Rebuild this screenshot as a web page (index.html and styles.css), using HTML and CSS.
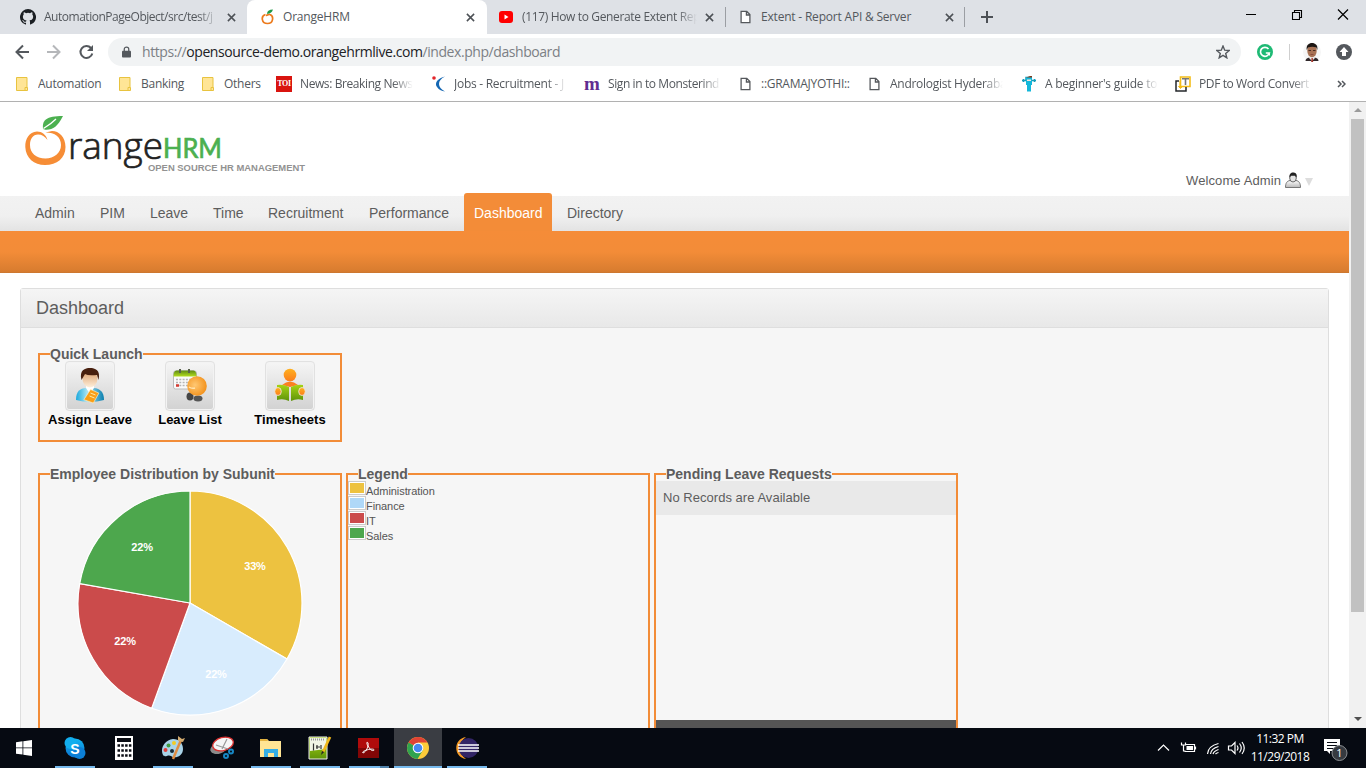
FILE: index.html
```html
<!DOCTYPE html>
<html lang="en">
<head>
<meta charset="utf-8">
<title>OrangeHRM</title>
<link rel="stylesheet" href="styles.css">
</head>
<body>
<svg class="defs" width="0" height="0">
  <defs>
    <linearGradient id="sky" x1="0" y1="0" x2="0" y2="1"><stop offset="0" stop-color="#12b5f2"/><stop offset="1" stop-color="#0a74d1"/></linearGradient>
    <linearGradient id="lime" x1="0" y1="0" x2="0" y2="1"><stop offset="0" stop-color="#a6d414"/><stop offset="1" stop-color="#5f930a"/></linearGradient>
    <linearGradient id="leaf" x1="0" y1="0" x2="0" y2="1"><stop offset="0" stop-color="#5d8a12"/><stop offset="1" stop-color="#b4de20"/></linearGradient>
    <linearGradient id="amber" x1="0" y1="0" x2="0" y2="1"><stop offset="0" stop-color="#ffb11f"/><stop offset="1" stop-color="#fb7d1c"/></linearGradient>
    <radialGradient id="ball" cx=".4" cy=".45" r=".6"><stop offset="0" stop-color="#ffc873"/><stop offset="1" stop-color="#f3921c"/></radialGradient>
    <linearGradient id="shirt" x1="0" y1="0" x2="1" y2="0"><stop offset="0" stop-color="#1aa9dd"/><stop offset=".4" stop-color="#a9e4f4"/><stop offset="1" stop-color="#0b7fae"/></linearGradient>
    <linearGradient id="skin" x1="0" y1="0" x2="0" y2="1"><stop offset="0" stop-color="#d99a66"/><stop offset="1" stop-color="#fff0dc"/></linearGradient>
    <linearGradient id="grey" x1="0" y1="0" x2="0" y2="1"><stop offset="0" stop-color="#fff"/><stop offset="1" stop-color="#b8b8b8"/></linearGradient>
    <symbol id="x" viewBox="0 0 10 10"><path d="M1 1l8 8M9 1L1 9" stroke="#4d5156" stroke-width="1.7" fill="none"/></symbol>
    <symbol id="doc" viewBox="0 0 12 14"><path d="M1.2.8h6.2l3.4 3.6v8.8H1.2zM7 1v3.8h3.8" fill="#fff" stroke="#55585c" stroke-width="1.4"/></symbol>
    <symbol id="folder" viewBox="0 0 12 14"><path d="M.5.5h10.5v10h.5v3H.5z" fill="#ffe596" stroke="#e8c33f"/><path d="M9 13V10.500h2" fill="none" stroke="#e8c33f"/></symbol>
  </defs>
</svg>

<header class="tabs">
  <div class="tab tab-1">
    <svg class="ico16" viewBox="0 0 16 16"><path fill="#1b1f23" d="M8 0a8 8 0 0 0-2.530 15.590c.4.070.55-.17.55-.38v-1.490c-2.230.49-2.700-.94-2.700-.94-.36-.92-.89-1.170-.89-1.170-.73-.5.06-.49.06-.49.8.06 1.230.83 1.230.83.71 1.230 1.870.87 2.330.66.070-.52.280-.87.500-1.070-1.780-.2-3.640-.89-3.640-3.950 0-.87.310-1.590.83-2.150-.08-.2-.36-1.020.080-2.120 0 0 .67-.21 2.200.82a7.600 7.600 0 0 1 4 0c1.530-1.040 2.200-.82 2.200-.82.44 1.100.16 1.920.080 2.120.51.560.82 1.270.82 2.150 0 3.070-1.870 3.750-3.650 3.950.29.250.54.730.54 1.480v2.190c0 .21.150.46.550.38A8 8 0 0 0 8 0z"/></svg>
    <span class="tab-title fade">AutomationPageObject/src/test/j</span>
    <svg class="x"><use href="#x"/></svg>
  </div>
  <div class="tab tab-2">
    <svg class="ico-or" viewBox="0 0 14 16"><path d="M4.500 5.500C-.5 7 .5 14.500 6.500 14.500S13 7 9 5.500C8 5 6.500 6.500 5 6.300" fill="none" stroke="#ec7a1c" stroke-width="1.700"/><path d="M6 5c0-3 2-4.500 6-4.500C11 3.500 9 4.500 6 5z" fill="#1f9a49"/></svg>
    <span class="tab-title">OrangeHRM</span>
    <svg class="x"><use href="#x"/></svg>
  </div>
  <div class="tab tab-3">
    <svg class="ico-yt" viewBox="0 0 14 12"><rect width="14" height="12" rx="3" fill="#f00"/><path d="M5.500 3.500v5l4-2.500z" fill="#fff"/></svg>
    <span class="tab-title fade">(117) How to Generate Extent Rep</span>
    <svg class="x"><use href="#x"/></svg>
  </div>
  <div class="tab tab-4">
    <svg class="ico-doc"><use href="#doc"/></svg>
    <span class="tab-title">Extent - Report API &amp; Server</span>
    <svg class="x"><use href="#x"/></svg>
  </div>
  <svg class="plus" viewBox="0 0 12 12"><path d="M6 0v12M0 6h12" stroke="#4d5156" stroke-width="2"/></svg>
  <svg class="winctl" viewBox="0 0 104 14"><g fill="none" stroke="#000"><path d="M0 7.500h10M46.500 5.500h7v7h-7zM48.500 5.500v-2h7v7h-2" stroke-width="1.100"/><path d="M92 2.500l10 10M102 2.500l-10 10" stroke-width="1.200"/></g></svg>
</header>

<div class="toolbar">
  <svg class="nav" viewBox="0 0 82 16"><g fill="none" stroke-width="2"><path d="M15 8H3M9 1.500L2.500 8 9 14.500" stroke="#54585d"/><path d="M33 8h12M39 1.500L45.500 8 39 14.500" stroke="#b5b7ba"/><path d="M77 4A6 6 0 1 0 78.300 9.500" stroke="#54585d"/></g><path d="M79 1v6h-6z" fill="#54585d"/></svg>
  <div class="omnibox">
    <svg class="lock" viewBox="0 0 10 12"><path d="M1 4.500h8q1 0 1 1V11q0 1-1 1H1q-1 0-1-1V5.500q0-1 1-1z" fill="#54585d"/><path d="M2.500 5V3a2.500 2.300 0 0 1 5 0v2" fill="none" stroke="#54585d" stroke-width="1.400"/></svg>
    <span class="url">https://<b>opensource-demo.orangehrmlive.com</b>/index.php/dashboard</span>
    <svg class="star" viewBox="0 0 14 14"><path d="M7 1l1.700 4.200 4.500.3-3.500 2.900 1.100 4.400L7 10.400l-3.800 2.400 1.100-4.400L.8 5.500l4.500-.3z" fill="none" stroke="#54585d" stroke-width="1.400"/></svg>
  </div>
  <svg class="gram" viewBox="0 0 16 16"><circle cx="8" cy="8" r="8" fill="#1fba75"/><path d="M11.500 5A4.500 4.500 0 1 0 12.300 9H8.800" fill="none" stroke="#fff" stroke-width="1.700"/><path d="M10.500 9.500h2.500V12z" fill="#fff"/></svg>
  <i class="tsep"></i>
  <svg class="face" viewBox="0 0 18 20"><ellipse cx="9" cy="10" rx="9" ry="9.500" fill="#f6f6f6"/><path d="M2.500 19q0-3 4-3.500h5q4 .5 4 3.500z" fill="#30282a"/><path d="M7 13h4l1 3-3 3-3-3z" fill="#eee8e4"/><path d="M8.500 16h1.300l.4 4h-2z" fill="#a3372c"/><ellipse cx="9" cy="9" rx="4.700" ry="6.200" fill="#a87254"/><path d="M3.700 8C3 3 6 1 9 1s6.300 2 5.300 7l-1-2.500q-4-1.500-8.300 0z" fill="#1b1512"/><path d="M5.500 8.500h2.500M10 8.500h2.500" stroke="#4a2c20"/><path d="M7.500 12.500h3" stroke="#8a4c3c"/></svg>
  <svg class="upd" viewBox="0 0 16 16"><circle cx="8" cy="8" r="8" fill="#54585d"/><path d="M8 3l4.500 5H10v4H6V8H3.500z" fill="#fff"/></svg>
</div>

<nav class="bookmarks">
  <svg class="bf b1"><use href="#folder"/></svg><span class="bt w1">Automation</span>
  <svg class="bf"><use href="#folder"/></svg><span class="bt w2">Banking</span>
  <svg class="bf"><use href="#folder"/></svg><span class="bt w3">Others</span>
  <span class="toi">TOI</span><span class="bt w4 fade">News: Breaking News</span>
  <svg class="jobs" viewBox="0 0 14 16"><path d="M13 .5C6 2 2 7 5 11c2 3 5 4 8 4.500C9 13 7 11 7 8c0-3 2-5.500 6-7.500z" fill="#1567b3"/><circle cx="2" cy="2" r="1.800" fill="#e3262b"/></svg><span class="bt w5 fade">Jobs - Recruitment - J</span>
  <span class="mon">m</span><span class="bt w6 fade">Sign in to Monsterind</span>
  <svg class="bd"><use href="#doc"/></svg><span class="bt w7">::GRAMAJYOTHI::</span>
  <svg class="bd"><use href="#doc"/></svg><span class="bt w8 fade">Andrologist Hyderaba</span>
  <svg class="beg" viewBox="0 0 14 16"><path d="M0 4.500h4V1.500h5v3h5M1.500 3v3M12.500 3v3" fill="none" stroke="#149dba" stroke-width="1.500"/><path d="M4 1h6v8H9v6.500H7.500V11v4.500H5V9H4z" fill="#14b7da"/><path d="M4 1.500L8 0h2v1.500z" fill="#7c3d20"/><path d="M5 3.500h4v1.500H5z" fill="#f5e5da"/></svg><span class="bt w9 fade">A beginner's guide to</span>
  <svg class="pdf" viewBox="0 0 16 16"><path d="M5.500 1h9.500v9.500H5.500z" fill="#fff" stroke="#f4bd18" stroke-width="1.600"/><path d="M7 2.800h7M10.500 3v6" stroke="#777" stroke-width="1.600"/><path d="M4 5H1v10h10v-4" fill="none" stroke="#24272b" stroke-width="1.500"/><path d="M5 5v5M3.500 10.500l2 2 2-2z" fill="#f4bd18" stroke="#f4bd18"/></svg><span class="bt w10 fade">PDF to Word Convert</span>
  <svg class="more" viewBox="0 0 9 8"><path d="M1 1l3 3-3 3M5 1l3 3-3 3" fill="none" stroke="#54585d" stroke-width="1.500"/></svg>
</nav>

<div class="viewport">
  <main class="page">
    <div class="brand">
      <svg class="logo" viewBox="0 0 290 62">
        <path fill="#f68d36" d="M22.500 25C21 19.500 17 16.500 12 16.500C4 17 0 24 .3 32C.8 43 9 50 20 50C32 50 40.500 43 40.500 32C40.500 22 34 16 27 16L20.500 17.500C30 17.500 36 22 36 30C36 38 29 43.500 20.500 43.500C11 43.500 5 38 5 30C5 24 8 19.500 13 19.500C17 19.500 20 21.500 22.500 25z"/>
        <path fill="#4cb050" d="M18 14C17 5 21 1 38 1 32.500 11.500 28 15 20.500 14.700z"/><path d="M18.500 13.500Q26 9 31 4" stroke="#fff" stroke-width="1.300" fill="none"/>
        <text class="l-range" x="43" y="43.500" textLength="95" lengthAdjust="spacingAndGlyphs">range</text>
        <text class="l-hrm" x="138" y="43" textLength="59" lengthAdjust="spacingAndGlyphs">HRM</text>
        <text class="l-tag" x="123" y="56" textLength="157" lengthAdjust="spacingAndGlyphs">OPEN SOURCE HR MANAGEMENT</text>
      </svg>
      <div class="welcome"><span>Welcome Admin</span>
        <svg class="person" viewBox="0 0 16 16"><path d="M.5 15.500C.5 11 2 9 5 8.500h6c3 .5 4.500 2.500 4.500 7z" fill="url(#grey)" stroke="#777"/><ellipse cx="8" cy="6" rx="3.300" ry="4" fill="#e4e4e4" stroke="#666"/><path d="M4.500 5.500C4 2 6 .5 8 .5s4.500 1 3.500 5L10 3.800H6z" fill="#222"/></svg>
        <i class="caret"></i>
      </div>
    </div>
    <ul class="menu">
      <li class="m1">Admin</li><li class="m2">PIM</li><li class="m3">Leave</li><li class="m4">Time</li><li class="m5">Recruitment</li><li class="m6">Performance</li><li class="current">Dashboard</li><li class="m8">Directory</li>
    </ul>
    <div class="submenu"></div>
    <section class="box">
      <h1>Dashboard</h1>
      <div class="inner">
        <fieldset class="panel quick">
          <legend>Quick Launch</legend>
          <div class="launch">
            <div><span class="tile"><svg viewBox="0 0 30 36"><path d="M1 32C1 23 5 20.500 11 20h8c6 .5 10 4 10 12q-14 4-28 0z" fill="url(#shirt)"/><path d="M11 20l4 6 4-6v-3h-8z" fill="#fff"/><ellipse cx="15" cy="11" rx="7.500" ry="8.500" fill="url(#skin)"/><path d="M6.500 12C4 2 10 0 15 0s11 2 8.500 12L22 7Q13 8 10 6z" fill="#48200f"/><path d="M14 22l9 1.500-3 11-10-1z" fill="#fa9e16" stroke="#fff2cb" stroke-width=".6" transform="rotate(14 17 28)"/><path d="M15.500 25l5 2M14.500 28l5 2" stroke="#ffe9a8"/></svg></span><b>Assign Leave</b></div>
            <div><span class="tile"><svg viewBox="0 0 34 36"><rect x=".5" y="3" width="23" height="18" rx="2" fill="#fafafa" stroke="#bbb"/><path d="M.5 8.500q0-6 3-6h17q3 0 3 6z" fill="url(#leaf)"/><path d="M7 1v4M16 1v4" stroke="#59614c" stroke-width="2"/><path d="M3 11.500h18M3 14.500h18M3 17.500h18" stroke="#b5b5b5" stroke-width="1.600" stroke-dasharray="2 1.300"/><path d="M3 17.500h3" stroke="#d43a32" stroke-width="2.500"/><ellipse cx="17" cy="28.500" rx="3.500" ry="4" fill="#454545"/><ellipse cx="25" cy="30.500" rx="4.500" ry="3" fill="#555"/><circle cx="24" cy="18" r="9.800" fill="url(#ball)"/><path d="M16 19q3 2 6 1" stroke="#ffe4b0" stroke-width="1.500" fill="none"/></svg></span><b>Leave List</b></div>
            <div><span class="tile"><svg viewBox="0 0 32 36"><circle cx="16" cy="7" r="6.300" fill="url(#amber)"/><path d="M8 17q8-7 16 0l-8 2z" fill="#fb8020"/><path d="M3 17q6-1 12 2v14q-6-3-12-1zM29 17q-6-1-12 2v14q6-3 12-1z" fill="url(#lime)"/><ellipse cx="4" cy="23.500" rx="3.300" ry="4" fill="url(#amber)" stroke="#eee" stroke-width=".8"/><ellipse cx="28" cy="23.500" rx="3.300" ry="4" fill="url(#amber)" stroke="#eee" stroke-width=".8"/></svg></span><b>Timesheets</b></div>
          </div>
        </fieldset>
        <div class="row">
          <fieldset class="panel">
            <legend>Employee Distribution by Subunit</legend>
            <svg class="pie" viewBox="-113 -113 226 226">
              <g stroke="#fff" stroke-width="1.200">
                <path fill="#edc240" d="M0 0V-112A112 112 0 0 1 97 56z"/>
                <path fill="#d8ecfd" d="M0 0L97 56A112 112 0 0 1-38.300 105.200z"/>
                <path fill="#cb4b4b" d="M0 0L-38.300 105.200A112 112 0 0 1-110.300-19.400z"/>
                <path fill="#4da74d" d="M0 0L-110.300-19.400A112 112 0 0 1 0-112z"/>
              </g>
              <text x="65" y="-33">33%</text><text x="26" y="75">22%</text><text x="-65" y="42">22%</text><text x="-48" y="-52">22%</text>
            </svg>
          </fieldset>
          <fieldset class="panel">
            <legend>Legend</legend>
            <ul class="keys">
              <li><i class="k-adm"></i>Administration</li><li><i class="k-fin"></i>Finance</li><li><i class="k-it"></i>IT</li><li><i class="k-sal"></i>Sales</li>
            </ul>
          </fieldset>
          <fieldset class="panel">
            <legend>Pending Leave Requests</legend>
            <div class="pending"><p>No Records are Available</p><div class="total"></div></div>
          </fieldset>
        </div>
      </div>
    </section>
  </main>
  <aside class="scroll"><i class="up"></i><div class="thumb"></div><i class="down"></i></aside>
</div>

<footer class="taskbar">
  <div class="task win"><svg viewBox="0 0 16 16"><path fill="#fff" d="M0 2.200l6.500-.9v6.200H0zM7.300 1.200L16 0v7.500H7.300zM0 8.300h6.500v6.300L0 13.700zM7.300 8.300H16V16l-8.700-1.300z"/></svg></div>
  <div class="task open"><svg viewBox="0 0 24 24"><circle cx="12" cy="12" r="9.500" fill="url(#sky)"/><circle cx="7.500" cy="7" r="6" fill="#12aeee"/><circle cx="16.500" cy="17" r="6" fill="#0c7fd6"/><text class="skype" x="12" y="17.500">S</text></svg></div>
  <div class="task"><svg viewBox="0 0 24 24"><path d="M3 0h18v24H3z" fill="#fff"/><path d="M5 2h14v4H5z" fill="#0a0d14"/><path d="M5.500 9.500h14M5.500 14.500h14M5.500 19.500h14" stroke="#0a0d14" stroke-width="2.500" stroke-dasharray="2.500 1.300"/></svg></div>
  <div class="task open"><svg viewBox="0 0 24 24"><path d="M12 3C3 4-1 13 2 19c2 3 5-1 8 1 3 3 12 1 12-7 0-6-4-10-10-10z" fill="#a9d3e8"/><circle cx="4.500" cy="14" r="2" fill="#df3d3a"/><circle cx="7.500" cy="9.500" r="2" fill="#3f9c41"/><circle cx="13" cy="7" r="2" fill="#f2cb22"/><circle cx="11" cy="15" r="2" fill="#152936"/><path d="M20 4l-8 19" stroke="#df8d43" stroke-width="2.500"/><path d="M17 0l4 3 3-1-2 4-5-1z" fill="#d4ac70"/></svg></div>
  <div class="task"><svg viewBox="0 0 24 24"><ellipse cx="9" cy="12" rx="9" ry="5.500" fill="#8b8b8b" transform="rotate(-20 9 12)"/><ellipse cx="13" cy="8" rx="10.500" ry="6.500" fill="#f5f5f5" stroke="#db3332" stroke-width="1.300" transform="rotate(-15 13 8)"/><path d="M17 3L12 13M6 9l12 4" stroke="#999" stroke-width="1.200"/><g fill="none" stroke="#1787c4" stroke-width="2"><circle cx="16" cy="20" r="2"/><circle cx="21" cy="15.500" r="2"/></g></svg></div>
  <div class="task open"><svg viewBox="0 0 24 24"><path d="M1 3h7l2 2h12v16H1z" fill="#ffe594"/><path d="M1 3h7l1 2H1z" fill="#e3b340"/><path d="M5 21v-8h14v8h-4v-4H9v4z" fill="#35aee5"/></svg></div>
  <div class="task open"><svg viewBox="0 0 24 24"><path d="M1 1h18v22H1z" fill="url(#lime)" stroke="#eee"/><path d="M2 2h16v11L2 15z" fill="#f1f5e6"/><path d="M3 3.500h13" stroke="#999" stroke-width="2" stroke-dasharray="1 1"/><path d="M5.500 7.500v7M8 11h4M9 9v4M13 9v4" stroke="#333" stroke-width="1.200"/><path d="M22 1l-7 15" stroke="#f1b91b" stroke-width="2.700"/><path d="M14 15l-1 4 3.200-3z" fill="#222"/></svg></div>
  <div class="task open stacked"><svg viewBox="0 0 24 24"><path d="M1 2h21v20H1z" fill="#b00b0b"/><path d="M1 12h21v10H1z" fill="#820606"/><path d="M6 17c3-1 6-7 5-10-1-2-2 0 0 3s3 5 5.500 4.500c2-1-1-2-5-1s-7 2.500-5.500 3.500z" fill="none" stroke="#fff"/></svg></div>
  <div class="task open active"><svg viewBox="0 0 24 24"><circle cx="12" cy="12" r="11" fill="#fccb3a"/><path d="M12 12L2.500 6.500A11 11 0 0 1 21.500 6.500H12z" fill="#df4335"/><path d="M12 12L2.500 6.500A11 11 0 0 0 11.500 23L17 14z" fill="#30a34f"/><circle cx="12" cy="12" r="5.300" fill="#fff"/><circle cx="12" cy="12" r="4.300" fill="#4688f1"/></svg></div>
  <div class="task open"><svg viewBox="0 0 24 24"><path d="M11 1C-2 3-2 21 11 23 3 18 3 6 11 1z" fill="#f59b27"/><circle cx="13.500" cy="12" r="10" fill="#322566"/><path d="M3 9h21M3 12h21M3 15h21" stroke="#fff" stroke-width="1.500"/></svg></div>
  <div class="tray">
    <svg class="t-icons" viewBox="0 0 88 16"><g fill="none" stroke="#fff" stroke-width="1.200"><path d="M1 10.500l5.500-5.500 5.500 5.500M28.500 4.500H37.500v7h-10M38.500 6.500v3M24.500 2.500v2.500h4V2.500M26.500 5v6h2"/><path d="M50.500 14Q51 6 61.500 3.500M53.500 14Q54 8.500 61.500 6.500M56 14Q57 11 61.500 9.500M58.500 14Q59.500 13 61.500 12.500"/><path d="M71.500 6h3L78 2.500v11L74.500 10h-3zM80 5.500q2 2.500 0 5M82.500 3.500q3.500 4.500 0 9M85 2q4.500 6 0 12"/></g><path d="M29.500 6h6.500v4h-6.500z" fill="#fff"/></svg>
    <div class="clock"><span>11:32 PM</span><span>11/29/2018</span></div>
    <svg class="note" viewBox="0 0 24 26"><path d="M0 4h16v12H6v3l-3-3H0z" fill="#fff"/><path d="M3 7.500h10M3 10.500h10M3 13.500h7" stroke="#080c14"/><circle cx="15.500" cy="18" r="7.500" fill="#363a40" stroke="#8b8e92"/><text x="15.500" y="22">1</text></svg>
  </div>
</footer>
</body>
</html>
```
FILE: styles.css
```css
* { box-sizing: border-box; }
body { margin: 0; width: 1366px; height: 768px; overflow: hidden; display: flex; flex-direction: column; background: #fff; font-family: "Liberation Sans", Arial, sans-serif; }
svg { display: block; flex: none; }
.defs { position: absolute; }
ul, h1, p { margin: 0; padding: 0; list-style: none; font-weight: normal; }
.fade { -webkit-mask-image: linear-gradient(to left, transparent, #000 20px); mask-image: linear-gradient(to left, transparent, #000 20px); }

/* browser chrome */
.tabs, .toolbar, .bookmarks { font-family: "Open Sans", "Noto Sans", sans-serif; color: #54585d; flex: none; }
.tabs { height: 34px; background: #dee1e6; display: flex; align-items: center; }
.tab { height: 34px; display: flex; align-items: center; font-size: 12px; }
.tab-title { flex: 1; min-width: 0; overflow: hidden; white-space: nowrap; line-height: 18px; letter-spacing: -0.2px; }
.x { width: 9px; height: 9px; }
.ico16 { width: 16px; height: 16px; margin-right: 8px; }
.tab-1 { width: 247px; padding: 0 11px 0 20px; }
.tab-1 .tab-title { letter-spacing: -0.48px; }
.tab-1 .x { margin-left: 9px; }
.tab-2 { width: 240px; padding: 0 12px 0 14px; background: #fff; border-radius: 8px 8px 0 0; }
.tab-2 .tab-title { letter-spacing: -0.2px; }
.ico-or { width: 14px; height: 16px; margin-right: 8px; }
.tab-3 { width: 239px; height: 20px; padding: 0 11px 0 12px; border-right: 1px solid #9b9ea3; }
.tab-3 .tab-title { letter-spacing: -0.35px; }
.tab-3 .x { margin-left: 8px; }
.ico-yt { width: 14px; height: 12px; margin-right: 9px; }
.tab-4 { width: 239px; height: 20px; padding: 0 10px 0 14px; border-right: 1px solid #9b9ea3; }
.ico-doc { width: 11px; height: 14px; margin-right: 10px; }
.plus { width: 12px; height: 12px; margin-left: 16px; }
.winctl { width: 104px; height: 14px; margin: -6px 16px 0 auto; }
.toolbar { height: 36px; display: flex; align-items: center; }
.nav { width: 82px; height: 16px; margin-left: 14px; }
.omnibox { width: 1133px; height: 28px; margin-left: 12px; padding: 0 11px 0 14px; border-radius: 14px; background: #f1f3f4; display: flex; align-items: center; }
.lock { width: 9px; height: 12px; }
.url { flex: 1; margin-left: 11px; font-size: 14px; letter-spacing: -0.43px; line-height: 20px; color: #7c8085; white-space: nowrap; }
.url b { font-weight: normal; color: #202124; }
.star { width: 14px; height: 14px; }
.gram { width: 16px; height: 16px; margin-left: 16px; }
.tsep { width: 1px; height: 16px; margin-left: 16px; background: #cfcfcf; }
.face { width: 18px; height: 20px; margin-left: 13px; }
.upd { width: 16px; height: 16px; margin-left: 15px; }
.bookmarks { height: 32px; padding-bottom: 4px; border-bottom: 1px solid #b1b1b1; display: flex; align-items: center; font-size: 12px; letter-spacing: -0.27px; }
.bt { overflow: hidden; white-space: nowrap; line-height: 18px; flex: none; }
.bf { width: 12px; height: 14px; margin-right: 10px; }
.b1 { margin-left: 16px; }
.w1 { width: 81px; } .w2 { width: 61px; } .w3 { width: 52px; }
.w4 { width: 113px; margin-right: 19px; } .w5 { width: 113px; margin-right: 17px; } .w6 { width: 113px; margin-right: 19px; }
.w7 { width: 108px; } .w8 { width: 113px; margin-right: 19px; } .w9 { width: 113px; margin-right: 17px; } .w10 { width: 113px; }
.w4, .w6, .w10 { letter-spacing: -0.4px; }
.toi { width: 16px; height: 16px; margin-right: 8px; background: #d9140f; color: #fff; font: 700 8px/16px "Liberation Serif", serif; text-align: center; }
.jobs { width: 14px; height: 16px; margin-right: 8px; }
.mon { width: 16px; margin-right: 8px; color: #5f2d91; font: 700 19px/16px "Liberation Serif", serif; }
.bd { width: 11px; height: 14px; margin-right: 10px; }
.beg { width: 14px; height: 16px; margin-right: 9px; }
.pdf { width: 16px; height: 16px; margin-right: 8px; }
.more { width: 9px; height: 8px; margin-left: 25px; }

/* application */
.viewport { height: 626px; flex: none; display: flex; }
.page { width: 1349px; height: 626px; overflow: hidden; color: #5d5d5d; }
.brand { height: 91px; display: flex; justify-content: space-between; padding: 13px 36px 0 25px; }
.logo { width: 290px; height: 62px; }
.l-range { font: 37px "Open Sans", sans-serif; font-weight: 300; fill: #222; stroke: #222; stroke-width: .7; }
.l-hrm { font: 27px Lato, sans-serif; fill: #4cb050; stroke: #4cb050; stroke-width: .7; }
.l-tag { font: bold 9.5px "Liberation Sans", sans-serif; fill: #929292; }
.welcome { display: flex; height: 20px; margin-top: 55px; align-items: center; font-size: 13px; letter-spacing: .1px; }
.person { width: 16px; height: 16px; margin-left: 4px; }
.caret { margin: 3px 0 0 4px; border: 4px solid transparent; border-top: 8px solid #ddd; border-bottom: 0; }
.menu { height: 38px; padding-left: 35px; display: flex; align-items: flex-end; background: linear-gradient(#fff 3px, #f2f2f2 3px, #f0f0f0 60%, #e3e3e3); font-size: 14px; white-space: nowrap; }
.menu li { height: 38px; line-height: 40px; }
.m1 { width: 65px; } .m2 { width: 50px; } .m3 { width: 63px; } .m4 { width: 55px; } .m5 { width: 101px; } .m6 { width: 95px; }
.menu .current { width: 88px; padding-left: 10px; background: #f38c38; color: #fff; border-radius: 3px 3px 0 0; }
.menu .m8 { margin-left: 15px; }
.submenu { height: 42px; background: linear-gradient(#f58c38, #f38c38 50%, #d87c2f 96%, #c97630); }
.box { width: 1309px; height: 480px; margin: 15px 0 0 20px; border: 1px solid #dedede; border-radius: 3px; background: #f6f6f6; }
.box h1 { height: 39px; padding-left: 15px; border-bottom: 1px solid #dedede; background: linear-gradient(#f5f5f5, #e8e8e8); font-size: 18px; line-height: 38px; }
.inner { padding: 18px 17px 0; }
.panel { width: 304px; min-width: 0; margin: 0; padding: 0; border: 2px solid #f28c38; }
.panel legend { margin-left: 10px; padding: 0; font-size: 14px; font-weight: bold; line-height: 16px; height: 16px; }
.quick { height: 96px; }
.launch { display: flex; }
.launch > div { width: 100px; margin-top: -1px; display: flex; flex-direction: column; align-items: center; color: #000; font-size: 13px; line-height: 16px; }
.tile { width: 50px; height: 50px; border: 1px solid #e1e1e1; box-shadow: inset 0 0 0 1px #f3f3f3; border-radius: 4px; background: linear-gradient(#f5f5f5, #d2d2d2); display: flex; align-items: center; justify-content: center; }
.tile svg { width: 34px; height: 36px; }
.launch b { margin-top: 1px; white-space: nowrap; }
.row { display: flex; gap: 4px; margin-top: 24px; }
.row .panel { height: 300px; }
.pie { width: 226px; height: 226px; margin: 8px 0 0 37px; }
.pie text { font: bold 11px "Liberation Sans", sans-serif; letter-spacing: -.2px; fill: #fff; text-anchor: middle; }
.keys { font-size: 11px; letter-spacing: -.07px; color: #545454; }
.keys li { height: 15px; line-height: 18px; display: flex; }
.keys i { width: 18px; height: 14px; margin-top: -1px; border: 1px solid #ccc; box-shadow: inset 0 0 0 1px #fff; }
.k-adm { background: #edc240; } .k-fin { background: #afd8f8; } .k-it { background: #cb4b4b; } .k-sal { background: #4da74d; }
.pending { height: 260px; margin-top: -1px; display: flex; flex-direction: column; }
.pending p { height: 34px; padding-left: 7px; background: #e9e9e9; font-size: 13px; line-height: 34px; letter-spacing: .03px; }
.total { height: 20px; margin-top: 205px; background: #555; }
.scroll { width: 17px; height: 626px; padding: 6px 2px 7px; background: #f1f1f1; display: flex; flex-direction: column; align-items: center; }
.up { border: 4px solid transparent; border-top: 0; border-bottom: 4px solid #9b9b9b; }
.thumb { width: 13px; height: 493px; margin-top: 7px; background: #c1c1c1; }
.down { margin-top: auto; border: 4px solid transparent; border-bottom: 0; border-top: 4px solid #505050; }

/* taskbar */
.taskbar { height: 40px; flex: none; display: flex; gap: 1px; background: #060a12; }
.task { width: 48px; height: 40px; flex: none; display: flex; align-items: center; justify-content: center; }
.task svg { width: 24px; height: 24px; }
.task.win { width: 50px; padding-right: 2px; }
.win svg { width: 16px; height: 16px; }
.open { background: linear-gradient(#76b9ed, #76b9ed) center bottom / 40px 2px no-repeat; }
.stacked { background: linear-gradient(to right, #76b9ed 31px, #4f81aa 31px) center bottom / 40px 2px no-repeat; }
.active { background: linear-gradient(#3a3d43 38px, #76b9ed 38px); }
.skype { font: bold 14px "Liberation Sans", sans-serif; fill: #fff; text-anchor: middle; }
.tray { margin-left: auto; width: 209px; display: flex; align-items: center; color: #fff; }
.t-icons { width: 88px; height: 16px; }
.clock { width: 70px; margin-right: 9px; display: flex; flex-direction: column; align-items: center; font: 12px/18px "Open Sans", sans-serif; letter-spacing: -.5px; white-space: nowrap; }
.note { width: 24px; height: 26px; }
.note text { font: 11px "Open Sans", sans-serif; fill: #fff; text-anchor: middle; }
```
